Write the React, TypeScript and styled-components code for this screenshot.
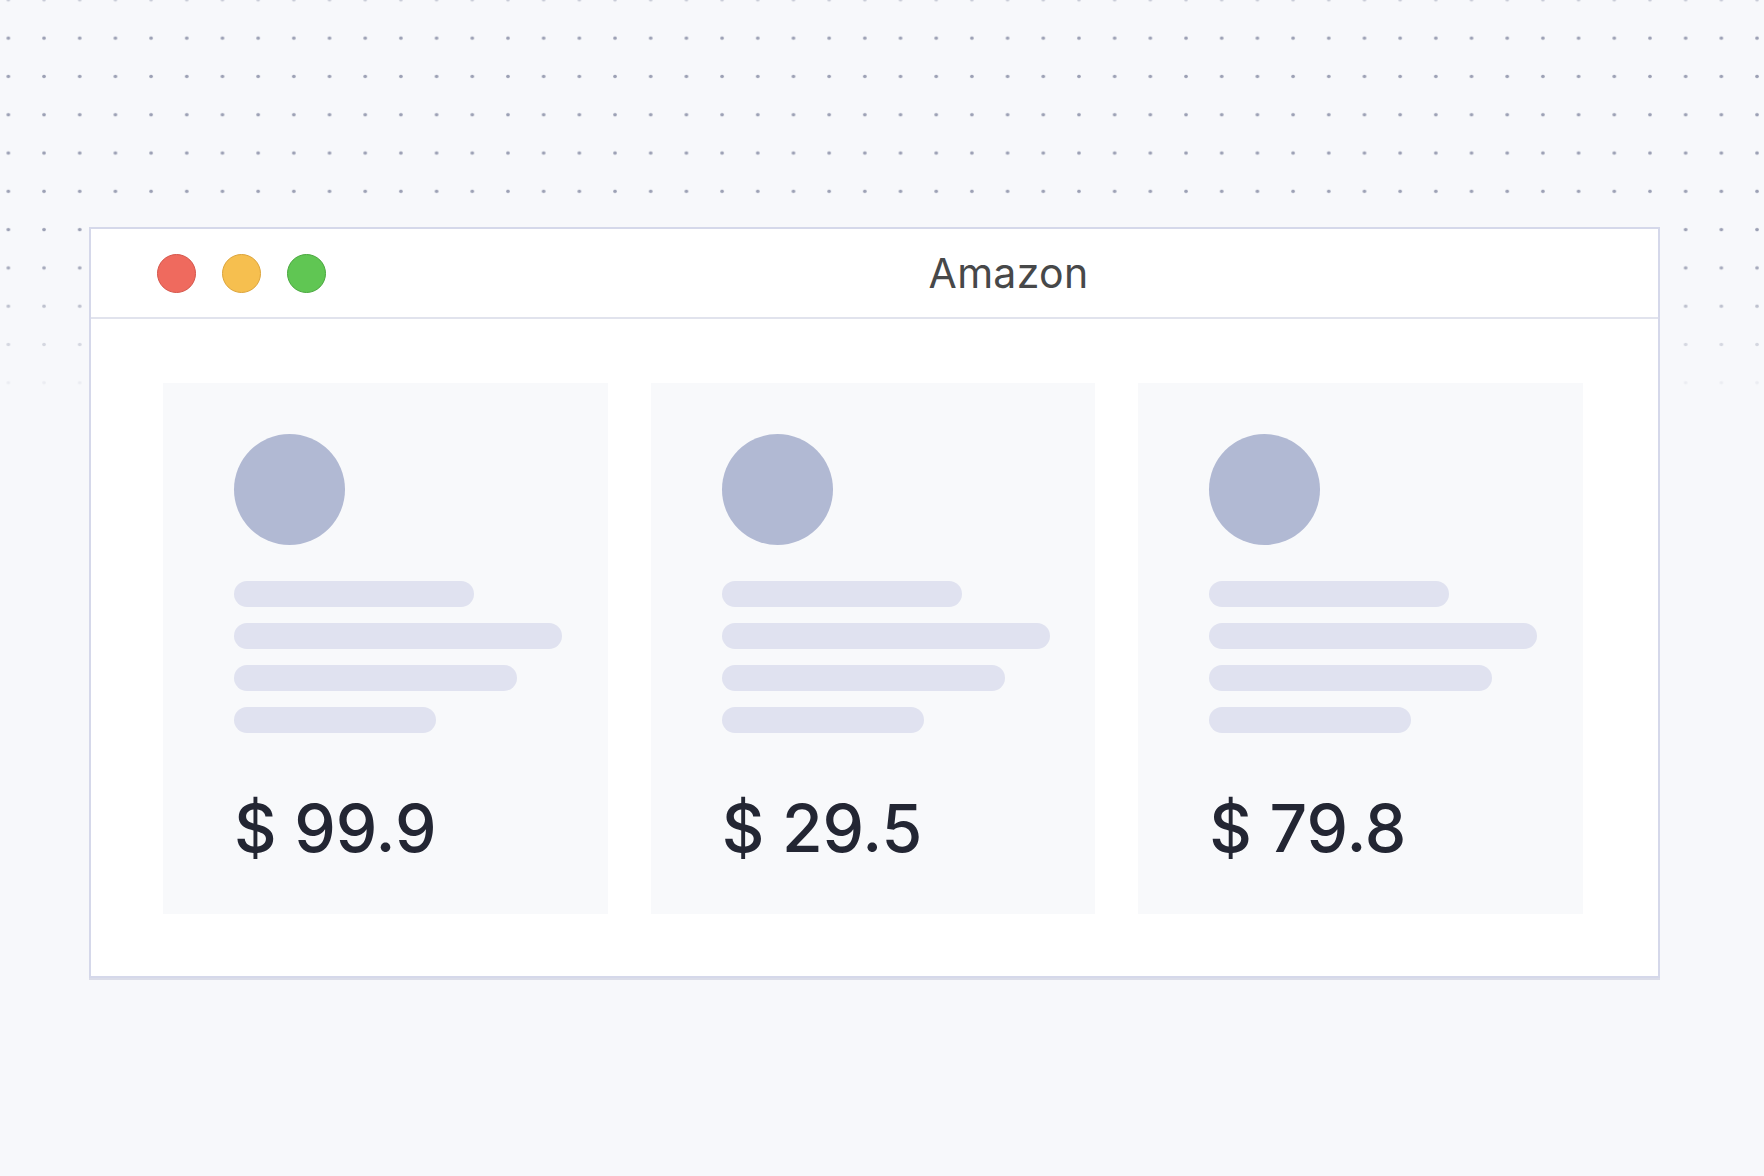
import React from "react";
import styled, { createGlobalStyle } from "styled-components";

const GlobalStyle = createGlobalStyle`
  html, body {
    margin: 0;
    padding: 0;
    background: #f7f8fb;
    font-family: Inter, "Noto Sans", "Liberation Sans", sans-serif;
  }
`;

interface Product {
  price: string;
}

const products: Product[] = [
  { price: "$ 99.9" },
  { price: "$ 29.5" },
  { price: "$ 79.8" },
];

// skeleton line widths, same for every card
const lineWidths = [240, 328, 283, 202];

export default function App() {
  return (
    <>
      <GlobalStyle />
      <Page>
        <BrowserWindow>
          <TitleBar>
            <Lights>
              <Light $color="#ef6a5e" $edge="#d5564b" />
              <Light $color="#f6bf4f" $edge="#dca43b" />
              <Light $color="#60c653" $edge="#4aa83f" />
            </Lights>
            <Title>Amazon</Title>
          </TitleBar>
          <Content>
            {products.map((p) => (
              <Card key={p.price}>
                <Avatar />
                <Lines>
                  {lineWidths.map((w, i) => (
                    <Line key={i} $width={w} />
                  ))}
                </Lines>
                <Price>{p.price}</Price>
              </Card>
            ))}
          </Content>
        </BrowserWindow>
      </Page>
    </>
  );
}

const Page = styled.div`
  position: relative;
  width: 1764px;
  height: 1176px;
  box-sizing: border-box;
  padding: 227px 0 0 89px;
  overflow: hidden;

  /* dotted backdrop that fades out toward the window */
  &::before {
    content: "";
    position: absolute;
    left: 0;
    top: 0;
    right: 0;
    height: 420px;
    background-image: radial-gradient(
      circle,
      rgba(140, 145, 168, 0.85) 1.4px,
      transparent 2.1px
    );
    background-size: 35.7px 38.3px;
    background-position: -9.5px 19px;
    -webkit-mask-image: linear-gradient(to bottom, rgba(0,0,0,0.5) 0, #000 30px, #000 250px, transparent 400px);
    mask-image: linear-gradient(to bottom, rgba(0,0,0,0.5) 0, #000 30px, #000 250px, transparent 400px);
    z-index: 0;
  }
`;

const BrowserWindow = styled.div`
  position: relative;
  z-index: 1;
  width: 1571px;
  box-sizing: border-box;
  background: #ffffff;
  border: 2px solid #d5d8ea;
  box-shadow: 0 2px 0 rgba(200, 204, 222, 0.6);
`;

const TitleBar = styled.div`
  height: 88px;
  display: flex;
  align-items: center;
  padding-left: 66px;
  border-bottom: 2px solid #e1e3ed;
`;

const Lights = styled.div`
  display: flex;
  gap: 26px;
`;

const Light = styled.span<{ $color: string; $edge: string }>`
  width: 39px;
  height: 39px;
  box-sizing: border-box;
  border-radius: 50%;
  background: ${(p) => p.$color};
  border: 1px solid ${(p) => p.$edge};
`;

const Title = styled.div`
  flex: 1;
  text-align: center;
  padding-left: 33px;
  font-size: 41px;
  font-weight: 400;
  color: #474849;
  letter-spacing: 0.3px;
`;

const Content = styled.div`
  display: grid;
  grid-template-columns: repeat(3, minmax(0, 1fr));
  gap: 43px;
  padding: 64px 75px 62px 72px;
`;

const Card = styled.div`
  display: flex;
  flex-direction: column;
  align-items: flex-start;
  background: #f8f9fb;
  padding: 51px 0 53px 71px;
`;

const Avatar = styled.div`
  width: 111px;
  height: 111px;
  border-radius: 50%;
  background: #b1b9d3;
`;

const Lines = styled.div`
  display: flex;
  flex-direction: column;
  gap: 16px;
  margin-top: 36px;
`;

const Line = styled.div<{ $width: number }>`
  width: ${(p) => p.$width}px;
  height: 26px;
  border-radius: 13px;
  background: #e0e2f0;
`;

const Price = styled.div`
  margin-top: 62px;
  font-size: 66px;
  line-height: 66px;
  font-weight: 500;
  color: #232633;
  white-space: nowrap;
`;
